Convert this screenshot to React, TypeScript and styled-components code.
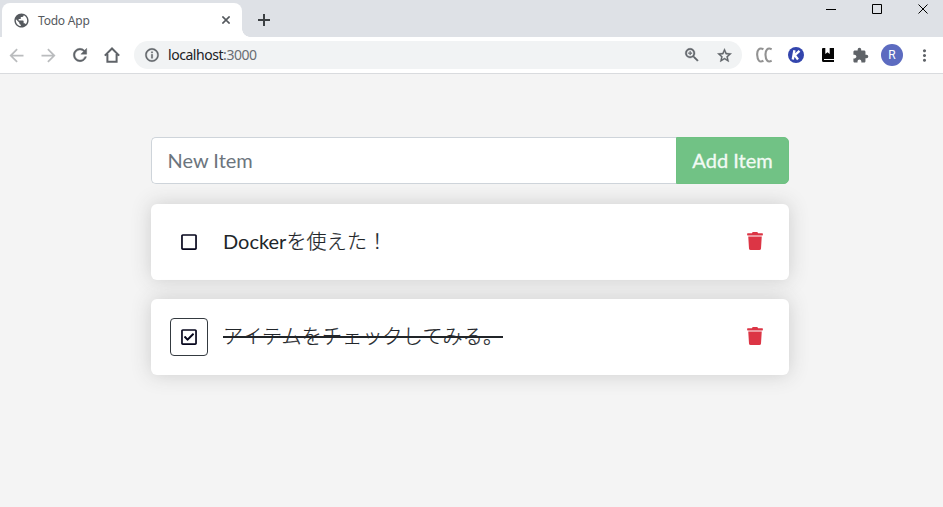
import React from "react";
import styled, { createGlobalStyle } from "styled-components";
import {
  MdArrowBack,
  MdArrowForward,
  MdExtension,
  MdInfoOutline,
  MdMoreVert,
  MdPublic,
  MdRefresh,
  MdStarBorder,
  MdZoomIn,
} from "react-icons/md";
import { FaRegCheckSquare, FaRegSquare, FaTrash } from "react-icons/fa";

const GlobalStyle = createGlobalStyle`
  *, *::before, *::after { box-sizing: border-box; }
  html, body { margin: 0; padding: 0; background: #f4f4f4; }
  body { overflow: hidden; }
  svg { display: block; flex: none; }
  button, input { font: inherit; margin: 0; }
`;

const Window = styled.div`
  display: flex;
  flex-direction: column;
  width: 943px;
  height: 507px;
  overflow: hidden;
  background: #f4f4f4;
`;

const TabStrip = styled.div`
  display: flex;
  align-items: flex-start;
  height: 37px;
  padding-left: 2px;
  background: #dee1e6;
`;

const Tab = styled.div`
  position: relative;
  display: flex;
  align-items: center;
  width: 240px;
  height: 34px;
  margin-top: 3px;
  padding: 0 12px 0 11px;
  border-radius: 8px 8px 0 0;
  background: #fff;
  color: #55595e;

  &::after {
    content: "";
    position: absolute;
    left: 100%;
    bottom: 0;
    width: 8px;
    height: 8px;
    background: radial-gradient(circle at 100% 0, transparent 7.5px, #fff 8px);
  }
`;

const TabTitle = styled.span`
  flex: 1;
  margin-left: 8px;
  padding-top: 1px;
  font: 12px/16px "Noto Sans", sans-serif;
  letter-spacing: -0.2px;
  color: #55595e;
`;

const NewTab = styled.div`
  display: flex;
  margin: 14px 0 0 16px;
`;

const WindowControls = styled.div`
  display: flex;
  gap: 36px;
  margin: 4px 15px 0 auto;
`;

const Toolbar = styled.div`
  display: flex;
  align-items: center;
  height: 37px;
  border-bottom: 1px solid #d9dbde;
  background: #fff;
  color: #5f6368;
`;

const Slot = styled.div<{ $faded?: boolean }>`
  display: flex;
  flex: none;
  justify-content: center;
  align-items: center;
  width: 32px;
  height: 28px;
  color: ${(p) => (p.$faded ? "#babcbe" : "#5f6368")};
`;

const HeavySlot = styled(Slot)`
  path:not([fill="none"]) {
    stroke: currentColor;
    stroke-width: 0.5px;
  }
`;

const AddressBar = styled.div`
  display: flex;
  align-items: center;
  width: 608px;
  height: 28px;
  margin: 0 6px;
  padding: 0 2px;
  border-radius: 14px;
  background: #f1f3f4;
`;

const Url = styled.span`
  flex: 1;
  font: 14px/20px "Noto Sans", sans-serif;
  letter-spacing: -0.45px;
  color: #202124;
`;

const Port = styled.span`
  color: #6a6e73;
`;

const Avatar = styled.div`
  width: 22px;
  height: 22px;
  border-radius: 50%;
  background: #5c6bc0;
  color: #fff;
  font: 12px/23px Roboto, sans-serif;
  text-align: center;
`;

const Page = styled.main`
  display: flex;
  flex-direction: column;
  width: 638px;
  margin: 63px 0 0 151px;
  font: 20px/30px Lato, "Noto Sans CJK JP", sans-serif;
  color: #212529;
`;

const Form = styled.form`
  display: flex;
  height: 47px;
  margin-bottom: 20px;
`;

const ItemInput = styled.input`
  flex: 1;
  min-width: 0;
  padding: 0 15.5px 2px;
  border: 1px solid #ced4da;
  border-right: 0;
  border-radius: 5px 0 0 5px;
  background: #fff;
  outline: none;
  &::placeholder { color: #6c757d; opacity: 1; }
`;

const AddButton = styled.button`
  width: 113px;
  padding: 0 0 2px;
  border: 1px solid #6ec182;
  border-radius: 0 5px 5px 0;
  background: #71c285;
  color: #f2faf4;
  -webkit-text-stroke: 0.3px #f2faf4;
`;

const Item = styled.div`
  display: flex;
  align-items: center;
  height: 76px;
  margin-bottom: 19px;
  padding: 0 19px;
  border-radius: 6px;
  background: #fff;
  box-shadow: 0 0 20px #ccc;
`;

const Toggle = styled.button<{ $focused: boolean }>`
  display: flex;
  justify-content: center;
  align-items: center;
  width: 38px;
  height: 38px;
  padding: 0 0 1px;
  border: 1px solid ${(p) => (p.$focused ? "#343a40" : "transparent")};
  border-radius: 4px;
  background: none;
  color: #06061c;
`;

const ItemName = styled.span<{ $done: boolean }>`
  position: relative;
  margin-left: 15px;
  padding-bottom: 2px;

  &::after {
    content: "";
    display: ${(p) => (p.$done ? "block" : "none")};
    position: absolute;
    left: 0;
    right: 0;
    top: 15px;
    height: 2px;
    background: currentColor;
  }
`;

const Kana = styled.span`
  font-family: "Noto Sans CJK JP", sans-serif;
  font-weight: 300;
  letter-spacing: 0.2px;
  -webkit-text-stroke: 0.2px currentColor;
`;

const Remove = styled.button`
  display: flex;
  margin-left: auto;
  padding: 0 0 2px;
  border: 0;
  margin-right: 6px;
  background: none;
  color: #dc3545;
`;

const HomeIcon = () => (
  <svg width="16" height="16" viewBox="0 0 16 16" fill="none" stroke="currentColor" strokeWidth="2">
    <path d="M.8 8.6 8 1.500l7.200 7.100M3.400 7v7.700h9.200V7" />
  </svg>
);

const CrossIcon = ({ size, weight }: { size: number; weight: number }) => (
  <svg width={size} height={size} viewBox="0 0 10 10" stroke="currentColor" strokeWidth={weight}>
    <path d="m.5.5 9 9M9.5.5l-9 9" />
  </svg>
);

const PlusIcon = () => (
  <svg width="12" height="12" viewBox="0 0 12 12" stroke="#3c4043" strokeWidth="2">
    <path d="M6 0v12M0 6h12" />
  </svg>
);

const CaptionsIcon = () => (
  <svg width="16" height="16" viewBox="0 0 16 16" fill="none" stroke="#929292" strokeWidth="2.1">
    <path d="M7.400 2.200C3.300.2.900 2.800 1.200 8s2.100 7.800 6.200 5.800M15.700 2.200C11.600.2 9.300 2.800 9.500 8s2.100 7.800 6.200 5.800" />
  </svg>
);

const KIcon = () => (
  <svg width="16" height="16" viewBox="0 0 16 16">
    <circle cx="8" cy="8" r="8" fill="#3345ad" />
    <path d="M6.4 3.3 4.8 12.5M11.5 3.8 6.8 8.2l3.2 4.2" fill="none" stroke="#fff" strokeWidth="2.4" />
  </svg>
);

const BookIcon = () => (
  <svg width="12" height="14" viewBox="0 0 12 14">
    <path d="M1 0h2.300v6l2.200-1.700L7.700 6V0H12v11H2v1h10v2H1.500Q0 14 0 12.500V1Q0 0 1 0Z" fill="#050505" />
  </svg>
);

const MinimizeIcon = () => (
  <svg width="10" height="10" viewBox="0 0 10 10" stroke="#000">
    <path d="M0 5.500h10" />
  </svg>
);

const MaximizeIcon = () => (
  <svg width="10" height="10" viewBox="0 0 10 10" fill="none" stroke="#000">
    <path d="M.5.5h9v9h-9z" />
  </svg>
);

type Todo = { latin: string; japanese: string; done: boolean };

const todos: Todo[] = [
  { latin: "Docker", japanese: "を使えた！", done: false },
  { latin: "", japanese: "アイテムをチェックしてみる。", done: true },
];

const TodoItem = ({ todo }: { todo: Todo }) => (
  <Item>
    <Toggle type="button" $focused={todo.done}>
      {todo.done ? <FaRegCheckSquare size={18} /> : <FaRegSquare size={18} />}
    </Toggle>
    <ItemName $done={todo.done}>
      {todo.latin}
      <Kana>{todo.japanese}</Kana>
    </ItemName>
    <Remove type="button">
      <FaTrash size={18} />
    </Remove>
  </Item>
);

export default function App() {
  return (
    <Window>
      <GlobalStyle />
      <TabStrip>
        <Tab>
          <MdPublic size={17} />
          <TabTitle>Todo App</TabTitle>
          <CrossIcon size={8} weight={2} />
        </Tab>
        <NewTab>
          <PlusIcon />
        </NewTab>
        <WindowControls>
          <MinimizeIcon />
          <MaximizeIcon />
          <CrossIcon size={10} weight={1} />
        </WindowControls>
      </TabStrip>
      <Toolbar>
        <Slot $faded><MdArrowBack size={21} /></Slot>
        <Slot $faded><MdArrowForward size={21} /></Slot>
        <HeavySlot><MdRefresh size={20} /></HeavySlot>
        <Slot><HomeIcon /></Slot>
        <AddressBar>
          <HeavySlot><MdInfoOutline size={16} /></HeavySlot>
          <Url>localhost<Port>:3000</Port></Url>
          <HeavySlot><MdZoomIn size={18} /></HeavySlot>
          <HeavySlot><MdStarBorder size={17} /></HeavySlot>
        </AddressBar>
        <Slot><CaptionsIcon /></Slot>
        <Slot><KIcon /></Slot>
        <Slot><BookIcon /></Slot>
        <Slot><MdExtension size={17} /></Slot>
        <Slot><Avatar>R</Avatar></Slot>
        <Slot><MdMoreVert size={19} /></Slot>
      </Toolbar>
      <Page>
        <Form>
          <ItemInput placeholder="New Item" />
          <AddButton type="button">Add Item</AddButton>
        </Form>
        {todos.map((todo) => (
          <TodoItem key={todo.japanese} todo={todo} />
        ))}
      </Page>
    </Window>
  );
}
